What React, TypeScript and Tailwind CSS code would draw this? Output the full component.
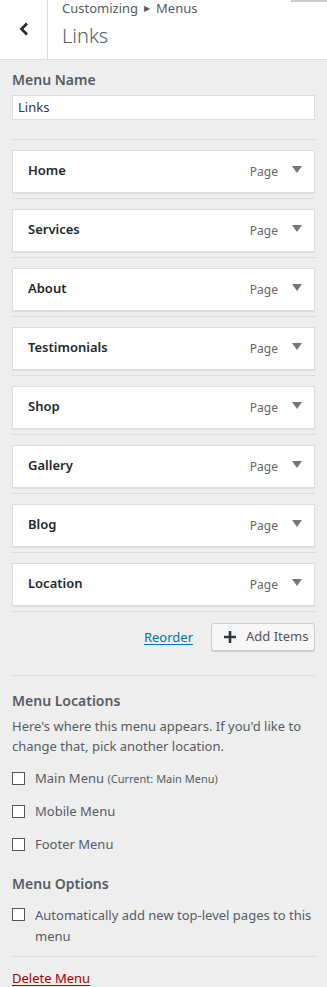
import React from 'react';

const items = ['Home', 'Services', 'About', 'Testimonials', 'Shop', 'Gallery', 'Blog', 'Location'];

const Checkbox: React.FC = () => (
  <span className="mt-[3px] inline-block h-[13px] w-[13px] shrink-0 border border-[#555] bg-white" />
);

const App: React.FC = () => {
  return (
    <div className="min-h-[987px] w-[327px] bg-[#eeeeee] font-['Noto_Sans','Open_Sans',sans-serif] text-[#555d66]">
      {/* Header */}
      <div className="relative flex h-[60px] border-b border-[#dddddd] bg-white">
        <div className="flex w-[48px] shrink-0 items-center justify-center border-r border-[#dddddd] pb-[2px]">
          <svg width="10" height="14" viewBox="0 0 10 14">
            <path d="M8 1.5 L2.5 7 L8 12.5" fill="none" stroke="#23282d" strokeWidth="2.6" />
          </svg>
        </div>
        <div className="flex flex-col pl-[14px]">
          <div className="mt-[-1px] flex items-center text-[13px] leading-[18px]">
            Customizing
            <span className="mx-[6px] text-[8px]">▶</span>
            Menus
          </div>
          <div className="mt-[7px] text-[20px] font-light leading-[24px]">Links</div>
        </div>
        <div className="absolute right-0 top-0 h-[2px] w-[36px] bg-[#cccccc]" />
      </div>

      <div className="px-[12px]">
        {/* Menu name */}
        <div className="pt-[10px] text-[14px] font-semibold leading-[20px]">Menu Name</div>
        <div className="mt-[5px] flex h-[25px] items-center border border-[#dddddd] bg-white px-[5px] text-[13px] text-[#32373c]">
          Links
        </div>

        {/* Items */}
        <div className="mt-[19px]">
          {items.map((item) => (
            <div key={item} className="border-t border-dotted border-[#cccccc] pb-[5px] pt-[10px]">
              <div className="flex h-[43px] items-center border border-[#dddddd] bg-white pl-[15px] pr-[12px] shadow-[0_1px_1px_rgba(0,0,0,0.06)]">
                <span className="flex-1 pb-[1px] text-[13px] font-semibold text-[#23282d]">{item}</span>
                <span className="text-[12px] text-[#666666]">Page</span>
                <svg className="ml-[14px] mb-[4px]" width="10" height="7" viewBox="0 0 10 7">
                  <path d="M0 0 H10 L5 7 Z" fill="#72777c" />
                </svg>
              </div>
            </div>
          ))}
        </div>

        {/* Actions */}
        <div className="flex items-center justify-end gap-[18px] border-t border-dotted border-[#cccccc] pt-[11px]">
          <a className="pt-[2px] text-[13px] text-[#0073aa] underline underline-offset-2" href="#">
            Reorder
          </a>
          <button className="flex h-[28px] w-[104px] items-center rounded-[3px] border border-[#cccccc] bg-[#f7f7f7] pl-[12px] text-[13px] text-[#555555] shadow-[0_1px_0_#cccccc]">
            <svg width="12" height="12" viewBox="0 0 12 12">
              <path d="M6 0 V12 M0 6 H12" stroke="#32373c" strokeWidth="2.6" />
            </svg>
            <span className="ml-[10px]">Add Items</span>
          </button>
        </div>

        <div className="mt-[24px] border-t border-[#dddddd]" />

        {/* Menu locations */}
        <div className="pt-[15px] text-[14px] font-semibold leading-[20px]">Menu Locations</div>
        <p className="mt-[5px] text-[13px] leading-[20px]">
          Here's where this menu appears. If you'd like to change that, pick another location.
        </p>
        <div className="mt-[13px] flex flex-col gap-[14px] text-[13px] leading-[19px]">
          <label className="flex gap-[10px]">
            <Checkbox />
            <span>
              Main Menu <span className="text-[11px]">(Current: Main Menu)</span>
            </span>
          </label>
          <label className="flex gap-[10px]">
            <Checkbox />
            <span>Mobile Menu</span>
          </label>
          <label className="flex gap-[10px]">
            <Checkbox />
            <span>Footer Menu</span>
          </label>
        </div>

        {/* Menu options */}
        <div className="pt-[20px] text-[14px] font-semibold leading-[20px]">Menu Options</div>
        <label className="mt-[11px] flex gap-[10px] text-[13px] leading-[21px]">
          <Checkbox />
          <span>Automatically add new top-level pages to this menu</span>
        </label>

        <div className="mt-[9px] border-t border-dotted border-[#cccccc] pt-[8px]">
          <a className="text-[13px] text-[#a00000] underline underline-offset-2" href="#">
            Delete Menu
          </a>
        </div>
      </div>
    </div>
  );
};

export default App;
